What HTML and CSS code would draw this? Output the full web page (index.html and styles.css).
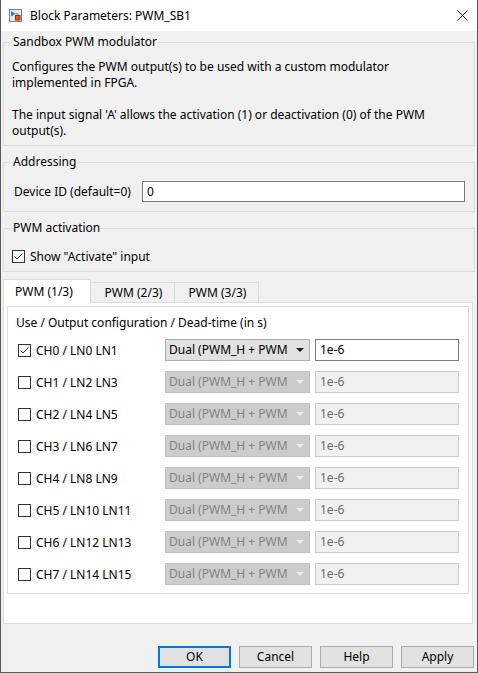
FILE: index.html
```html
<!DOCTYPE html>
<html>
<head>
<meta charset="utf-8">
<link rel="stylesheet" href="styles.css">
</head>
<body>
<div class="window">
  <div class="titlebar">
    <svg class="app-icon" width="13" height="13" viewBox="0 0 13 13">
      <rect x="0.5" y="0.5" width="12" height="12" fill="#e8e8e8" stroke="#7f7f7f"/>
      <path d="M2 2 L2 7.5 L6.5 4.75 Z" fill="#2f7fd8"/>
      <path d="M6.5 4.75 H9 V6.5" fill="none" stroke="#4a8fdc" stroke-width="1"/>
      <rect x="6.5" y="6.5" width="4.5" height="4.5" fill="#e2562a" stroke="#8a2c10" stroke-width="1"/>
    </svg>
    <span class="title">Block Parameters: PWM_SB1</span>
    <svg class="close" width="11" height="11" viewBox="0 0 11 11">
      <path d="M0.5 0.5 L10.5 10.5 M10.5 0.5 L0.5 10.5" stroke="#111" stroke-width="1"/>
    </svg>
  </div>

  <div class="content">
    <fieldset class="group desc-group">
      <legend>Sandbox PWM modulator</legend>
      <p>Configures the PWM output(s) to be used with a custom modulator<br>implemented in FPGA.</p>
      <p class="para2">The input signal 'A' allows the activation (1) or deactivation (0) of the PWM<br>output(s).</p>
    </fieldset>

    <fieldset class="group addr-group">
      <legend>Addressing</legend>
      <div class="field-row">
        <label class="field-label">Device ID (default=0)</label>
        <div class="textbox">0</div>
      </div>
    </fieldset>

    <fieldset class="group act-group">
      <legend>PWM activation</legend>
      <div class="check-row">
        <span class="checkbox checked"><svg width="11" height="11" viewBox="0 0 11 11"><path d="M1.5 5.5 L4 8 L9.5 2.5" fill="none" stroke="#333" stroke-width="1"/></svg></span>
        <span>Show "Activate" input</span>
      </div>
    </fieldset>

    <div class="tabs">
      <div class="tab active">PWM (1/3)</div>
      <div class="tab">PWM (2/3)</div>
      <div class="tab">PWM (3/3)</div>
    </div>
    <div class="tab-panel">
      <div class="inner-box">
        <div class="inner-title">Use / Output configuration / Dead-time (in s)</div>
        <div class="ch-grid">
          <div class="ch-label"><span class="checkbox checked"><svg width="11" height="11" viewBox="0 0 11 11"><path d="M1.5 5.5 L4 8 L9.5 2.5" fill="none" stroke="#333" stroke-width="1"/></svg></span><span>CH0 / LN0 LN1</span></div>
          <div class="select"><span class="select-text">Dual (PWM_H + PWM</span><span class="arrow"></span></div>
          <div class="textbox small">1e-6</div>

          <div class="ch-label"><span class="checkbox"></span><span>CH1 / LN2 LN3</span></div>
          <div class="select disabled"><span class="select-text">Dual (PWM_H + PWM</span><span class="arrow"></span></div>
          <div class="textbox small disabled">1e-6</div>

          <div class="ch-label"><span class="checkbox"></span><span>CH2 / LN4 LN5</span></div>
          <div class="select disabled"><span class="select-text">Dual (PWM_H + PWM</span><span class="arrow"></span></div>
          <div class="textbox small disabled">1e-6</div>

          <div class="ch-label"><span class="checkbox"></span><span>CH3 / LN6 LN7</span></div>
          <div class="select disabled"><span class="select-text">Dual (PWM_H + PWM</span><span class="arrow"></span></div>
          <div class="textbox small disabled">1e-6</div>

          <div class="ch-label"><span class="checkbox"></span><span>CH4 / LN8 LN9</span></div>
          <div class="select disabled"><span class="select-text">Dual (PWM_H + PWM</span><span class="arrow"></span></div>
          <div class="textbox small disabled">1e-6</div>

          <div class="ch-label"><span class="checkbox"></span><span>CH5 / LN10 LN11</span></div>
          <div class="select disabled"><span class="select-text">Dual (PWM_H + PWM</span><span class="arrow"></span></div>
          <div class="textbox small disabled">1e-6</div>

          <div class="ch-label"><span class="checkbox"></span><span>CH6 / LN12 LN13</span></div>
          <div class="select disabled"><span class="select-text">Dual (PWM_H + PWM</span><span class="arrow"></span></div>
          <div class="textbox small disabled">1e-6</div>

          <div class="ch-label"><span class="checkbox"></span><span>CH7 / LN14 LN15</span></div>
          <div class="select disabled"><span class="select-text">Dual (PWM_H + PWM</span><span class="arrow"></span></div>
          <div class="textbox small disabled">1e-6</div>
        </div>
      </div>
    </div>

    <div class="buttons">
      <div class="btn default">OK</div>
      <div class="btn">Cancel</div>
      <div class="btn">Help</div>
      <div class="btn">Apply</div>
    </div>
  </div>
</div>
</body>
</html>
```

FILE: styles.css
```css
* { box-sizing: border-box; }
html, body { margin: 0; padding: 0; background: #f0f0f0; }
body {
  font-family: "Noto Sans", "Open Sans", sans-serif;
  font-size: 12px;
  color: #000;
}
.window {
  width: 478px;
  height: 673px;
  border: 1px solid #5a5a5a;
  border-top: none;
  background: #f0f0f0;
  overflow: hidden;
}
.titlebar {
  height: 31px;
  background: #fff;
  display: flex;
  align-items: center;
  padding-left: 8px;
}
.app-icon { margin-right: 8px; flex: none; }
.title { flex: 1; font-size: 12px; }
.close { margin-right: 9px; flex: none; }

.content {
  padding: 4px 2px 0 2px;
}
.group {
  margin: 0;
  border: 1px solid #dcdcdc;
  padding: 0 8px;
}
.group + .group { margin-top: 9px; }
.group legend {
  padding: 0 1px;
  line-height: 14px;
  height: 14px;
  font-size: 12px;
}
.desc-group { padding-top: 10px; padding-bottom: 6px; }
.desc-group p { margin: 0; line-height: 16px; }
.desc-group .para2 { margin-top: 16px; }

.addr-group { padding-top: 12px; padding-bottom: 9px; padding-right: 9px; }
.field-row { display: flex; align-items: center; }
.field-label { width: 130px; padding-left: 2px; flex: none; white-space: nowrap; }
.textbox {
  flex: 1;
  height: 21px;
  border: 1px solid #7a7a7a;
  background: #fff;
  padding-left: 4px;
  line-height: 19px;
  white-space: nowrap;
  overflow: hidden;
}

.act-group { padding-top: 13px; padding-bottom: 7px; }
.check-row { display: flex; align-items: center; height: 16px; }
.checkbox {
  width: 13px;
  height: 13px;
  border: 1px solid #333;
  background: #fff;
  flex: none;
  margin-right: 5px;
  display: inline-flex;
  align-items: center;
  justify-content: center;
}
.checkbox svg { display: block; }

.tabs {
  margin-top: 7px;
  display: flex;
  align-items: flex-end;
  height: 23px;
  position: relative;
  z-index: 1;
}
.tab {
  width: 84px;
  height: 20px;
  border-top: 1px solid #dcdcdc;
  border-right: 1px solid #dcdcdc;
  background: #f0f0f0;
  text-align: center;
  line-height: 19px;
  padding-left: 2px;
}
.tab.active {
  width: 88px;
  height: 24px;
  margin-bottom: -1px;
  background: #fff;
  border-left: 1px solid #dcdcdc;
  line-height: 24px;
  text-align: left;
  padding-left: 11px;
}
.tab-panel {
  margin-right: 2px;
  border: 1px solid #dcdcdc;
  background: #fff;
  padding: 3px 3px 29px 3px;
}
.inner-box {
  border: 1px solid #dcdcdc;
  padding: 8px 9px 8px 10px;
}
.inner-title { line-height: 16px; margin-left: -2px; }
.ch-grid {
  margin-top: 8px;
  display: grid;
  grid-template-columns: 142px 145px 1fr;
  column-gap: 5px;
  row-gap: 10px;
  grid-auto-rows: 22px;
}
.ch-label { display: flex; align-items: center; white-space: nowrap; }
.select {
  display: flex;
  align-items: center;
  border: 1px solid #adadad;
  background: #e1e1e1;
  padding: 0 5px 0 3px;
  height: 22px;
}
.select-text {
  flex: 1;
  overflow: hidden;
  white-space: nowrap;
  line-height: 20px;
}
.arrow {
  flex: none;
  margin-left: 6px;
  width: 0;
  height: 0;
  border-left: 4px solid transparent;
  border-right: 4px solid transparent;
  border-top: 4px solid #222;
}
.select.disabled { background: #cccccc; border-color: #bfbfbf; color: #838383; }
.select.disabled .arrow { border-top-color: #ececec; }
.textbox.small { height: 22px; line-height: 20px; }
.textbox.disabled { background: #f0f0f0; border-color: #cccccc; color: #6d6d6d; }

.buttons {
  margin-top: 22px;
  margin-right: 1px;
  display: flex;
  justify-content: flex-end;
  gap: 8px;
}
.btn {
  width: 73px;
  height: 22px;
  border: 1px solid #adadad;
  background: #e1e1e1;
  text-align: center;
  line-height: 20px;
  font-size: 12px;
}
.btn.default { border: 2px solid #0078d7; line-height: 18px; }
```
